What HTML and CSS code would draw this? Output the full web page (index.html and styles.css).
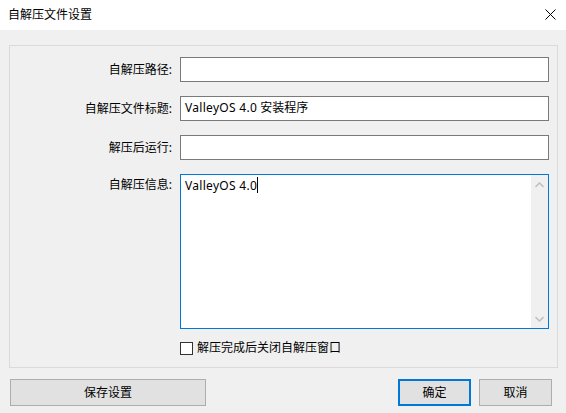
FILE: index.html
```html
<!DOCTYPE html>
<html lang="zh-CN">
<head>
<meta charset="utf-8">
<title>自解压文件设置</title>
<link rel="stylesheet" href="styles.css">
</head>
<body>
<div class="window">
  <div class="titlebar">
    <span class="title">自解压文件设置</span>
    <svg class="close" width="11" height="11" viewBox="0 0 11 11"><path d="M0.5 0.5 L10.5 10.5 M10.5 0.5 L0.5 10.5" stroke="#000" stroke-width="1" fill="none"/></svg>
  </div>
  <div class="body">
    <div class="panel">
      <div class="form">
        <label class="lbl">自解压路径:</label>
        <div class="input"></div>
        <label class="lbl">自解压文件标题:</label>
        <div class="input"><span class="latin">ValleyOS 4.0</span> 安装程序</div>
        <label class="lbl">解压后运行:</label>
        <div class="input"></div>
        <label class="lbl lbl-top">自解压信息:</label>
        <div class="memo">
          <div class="memo-text"><span class="latin">ValleyOS 4.0</span><span class="caret"></span></div>
          <div class="scroll">
            <svg width="9" height="6" viewBox="0 0 9 6"><path d="M0.5 5 L4.5 1 L8.5 5" stroke="#c2c2c2" stroke-width="1.6" fill="none"/></svg>
            <svg width="9" height="6" viewBox="0 0 9 6"><path d="M0.5 1 L4.5 5 L8.5 1" stroke="#c2c2c2" stroke-width="1.6" fill="none"/></svg>
          </div>
        </div>
        <div></div>
        <div class="check-row"><span class="box"></span><span>解压完成后关闭自解压窗口</span></div>
      </div>
    </div>
    <div class="actions">
      <button class="btn btn-save">保存设置</button>
      <div class="spacer"></div>
      <button class="btn btn-small btn-default">确定</button>
      <button class="btn btn-small">取消</button>
    </div>
  </div>
</div>
</body>
</html>
```
FILE: styles.css
```css
* { box-sizing: border-box; }
html, body {
  margin: 0;
  padding: 0;
  width: 566px;
  height: 413px;
  overflow: hidden;
  background: #f0f0f0;
  font-family: "Noto Sans", "Noto Sans CJK SC", sans-serif;
  font-size: 12px;
  color: #000;
}
.window {
  width: 566px;
  height: 413px;
  display: flex;
  flex-direction: column;
}
.titlebar {
  height: 30px;
  background: #fff;
  display: flex;
  align-items: center;
  justify-content: space-between;
  padding: 0 10px 1px 8px;
}
.title { font-size: 12px; line-height: 16px; }
.close { display: block; }
.body {
  flex: 1;
  padding: 15px 8px 0 9px;
  display: flex;
  flex-direction: column;
}
.panel {
  border: 1px solid #dadada;
  height: 323px;
  padding: 11px 8px 0 0;
}
.form {
  display: grid;
  grid-template-columns: 162px 369px;
  column-gap: 8px;
  row-gap: 14px;
  grid-template-rows: 25px 25px 25px 155px auto;
}
.lbl {
  text-align: right;
  align-self: center;
  line-height: 16px;
  white-space: nowrap;
  padding-top: 1px;
}
.lbl-top { align-self: start; padding-top: 3px; }
.input {
  height: 25px;
  background: #fff;
  border: 1px solid #7a7a7a;
  padding: 0 4px;
  line-height: 22px;
  white-space: nowrap;
}
.latin { letter-spacing: 0.3px; }
.memo {
  height: 155px;
  background: #fff;
  border: 1px solid #0078d7;
  display: flex;
}
.memo-text {
  flex: 1;
  padding: 2px 4px;
  line-height: 18px;
}
.caret {
  display: inline-block;
  width: 1px;
  height: 16px;
  background: #000;
  vertical-align: -3px;
}
.scroll {
  width: 17px;
  background: #f0f0f0;
  display: flex;
  flex-direction: column;
  justify-content: space-between;
  align-items: center;
  padding: 7px 0 6px;
}
.scroll svg { display: block; }
.check-row {
  margin-top: -3px;
  display: flex;
  align-items: center;
  gap: 4px;
  line-height: 16px;
}
.box {
  width: 13px;
  height: 13px;
  border: 1px solid #333;
  background: #fff;
}
.actions {
  margin-top: 11px;
  padding-left: 1px;
  padding-right: 6px;
  display: flex;
  gap: 8px;
}
.spacer { flex: 1; }
.btn {
  height: 27px;
  background: #e1e1e1;
  border: 1px solid #adadad;
  font-family: "Noto Sans", "Noto Sans CJK SC", sans-serif;
  font-size: 12px;
  color: #000;
  padding: 0;
  line-height: 16px;
}
.btn-save { width: 196px; }
.btn-small { width: 73px; }
.btn-default { border: 2px solid #0078d7; }
```
